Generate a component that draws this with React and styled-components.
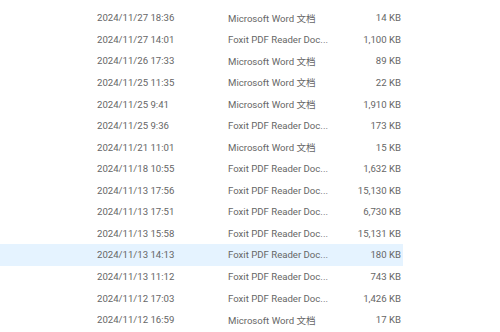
import React from "react";
import styled, { createGlobalStyle } from "styled-components";

const Global = createGlobalStyle`
  html, body { margin: 0; padding: 0; background: #ffffff; }
  body { font-family: Roboto, "Noto Sans CJK SC", sans-serif; }
`;

const List = styled.div`
  display: flex;
  flex-direction: column;
  padding-top: 7px;
  width: 403px;
`;

const Row = styled.div`
  display: grid;
  grid-template-columns: 97px 131px 1fr auto;
  align-items: center;
  height: 21.57px;
  padding-right: 2px;
  background: ${(p) => (p.$hover ? "#e5f3ff" : "transparent")};
  color: #666666;
  font-size: 9.6px;
  white-space: nowrap;
`;

const Cell = styled.span`
  grid-column: ${(p) => p.$col};
  text-align: ${(p) => (p.$right ? "right" : "left")};
`;

const rows = [
  ["2024/11/27 18:36", "Microsoft Word 文档", "14 KB"],
  ["2024/11/27 14:01", "Foxit PDF Reader Doc...", "1,100 KB"],
  ["2024/11/26 17:33", "Microsoft Word 文档", "89 KB"],
  ["2024/11/25 11:35", "Microsoft Word 文档", "22 KB"],
  ["2024/11/25 9:41", "Microsoft Word 文档", "1,910 KB"],
  ["2024/11/25 9:36", "Foxit PDF Reader Doc...", "173 KB"],
  ["2024/11/21 11:01", "Microsoft Word 文档", "15 KB"],
  ["2024/11/18 10:55", "Foxit PDF Reader Doc...", "1,632 KB"],
  ["2024/11/13 17:56", "Foxit PDF Reader Doc...", "15,130 KB"],
  ["2024/11/13 17:51", "Foxit PDF Reader Doc...", "6,730 KB"],
  ["2024/11/13 15:58", "Foxit PDF Reader Doc...", "15,131 KB"],
  ["2024/11/13 14:13", "Foxit PDF Reader Doc...", "180 KB"],
  ["2024/11/13 11:12", "Foxit PDF Reader Doc...", "743 KB"],
  ["2024/11/12 17:03", "Foxit PDF Reader Doc...", "1,426 KB"],
  ["2024/11/12 16:59", "Microsoft Word 文档", "17 KB"],
];

export default function App() {
  return (
    <>
      <Global />
      <List>
        {rows.map(([d, t, s], i) => (
          <Row key={i} $hover={i === 11}>
            <Cell $col={2}>{d}</Cell>
            <Cell $col={3}>{t}</Cell>
            <Cell $col={4} $right>{s}</Cell>
          </Row>
        ))}
      </List>
    </>
  );
}
